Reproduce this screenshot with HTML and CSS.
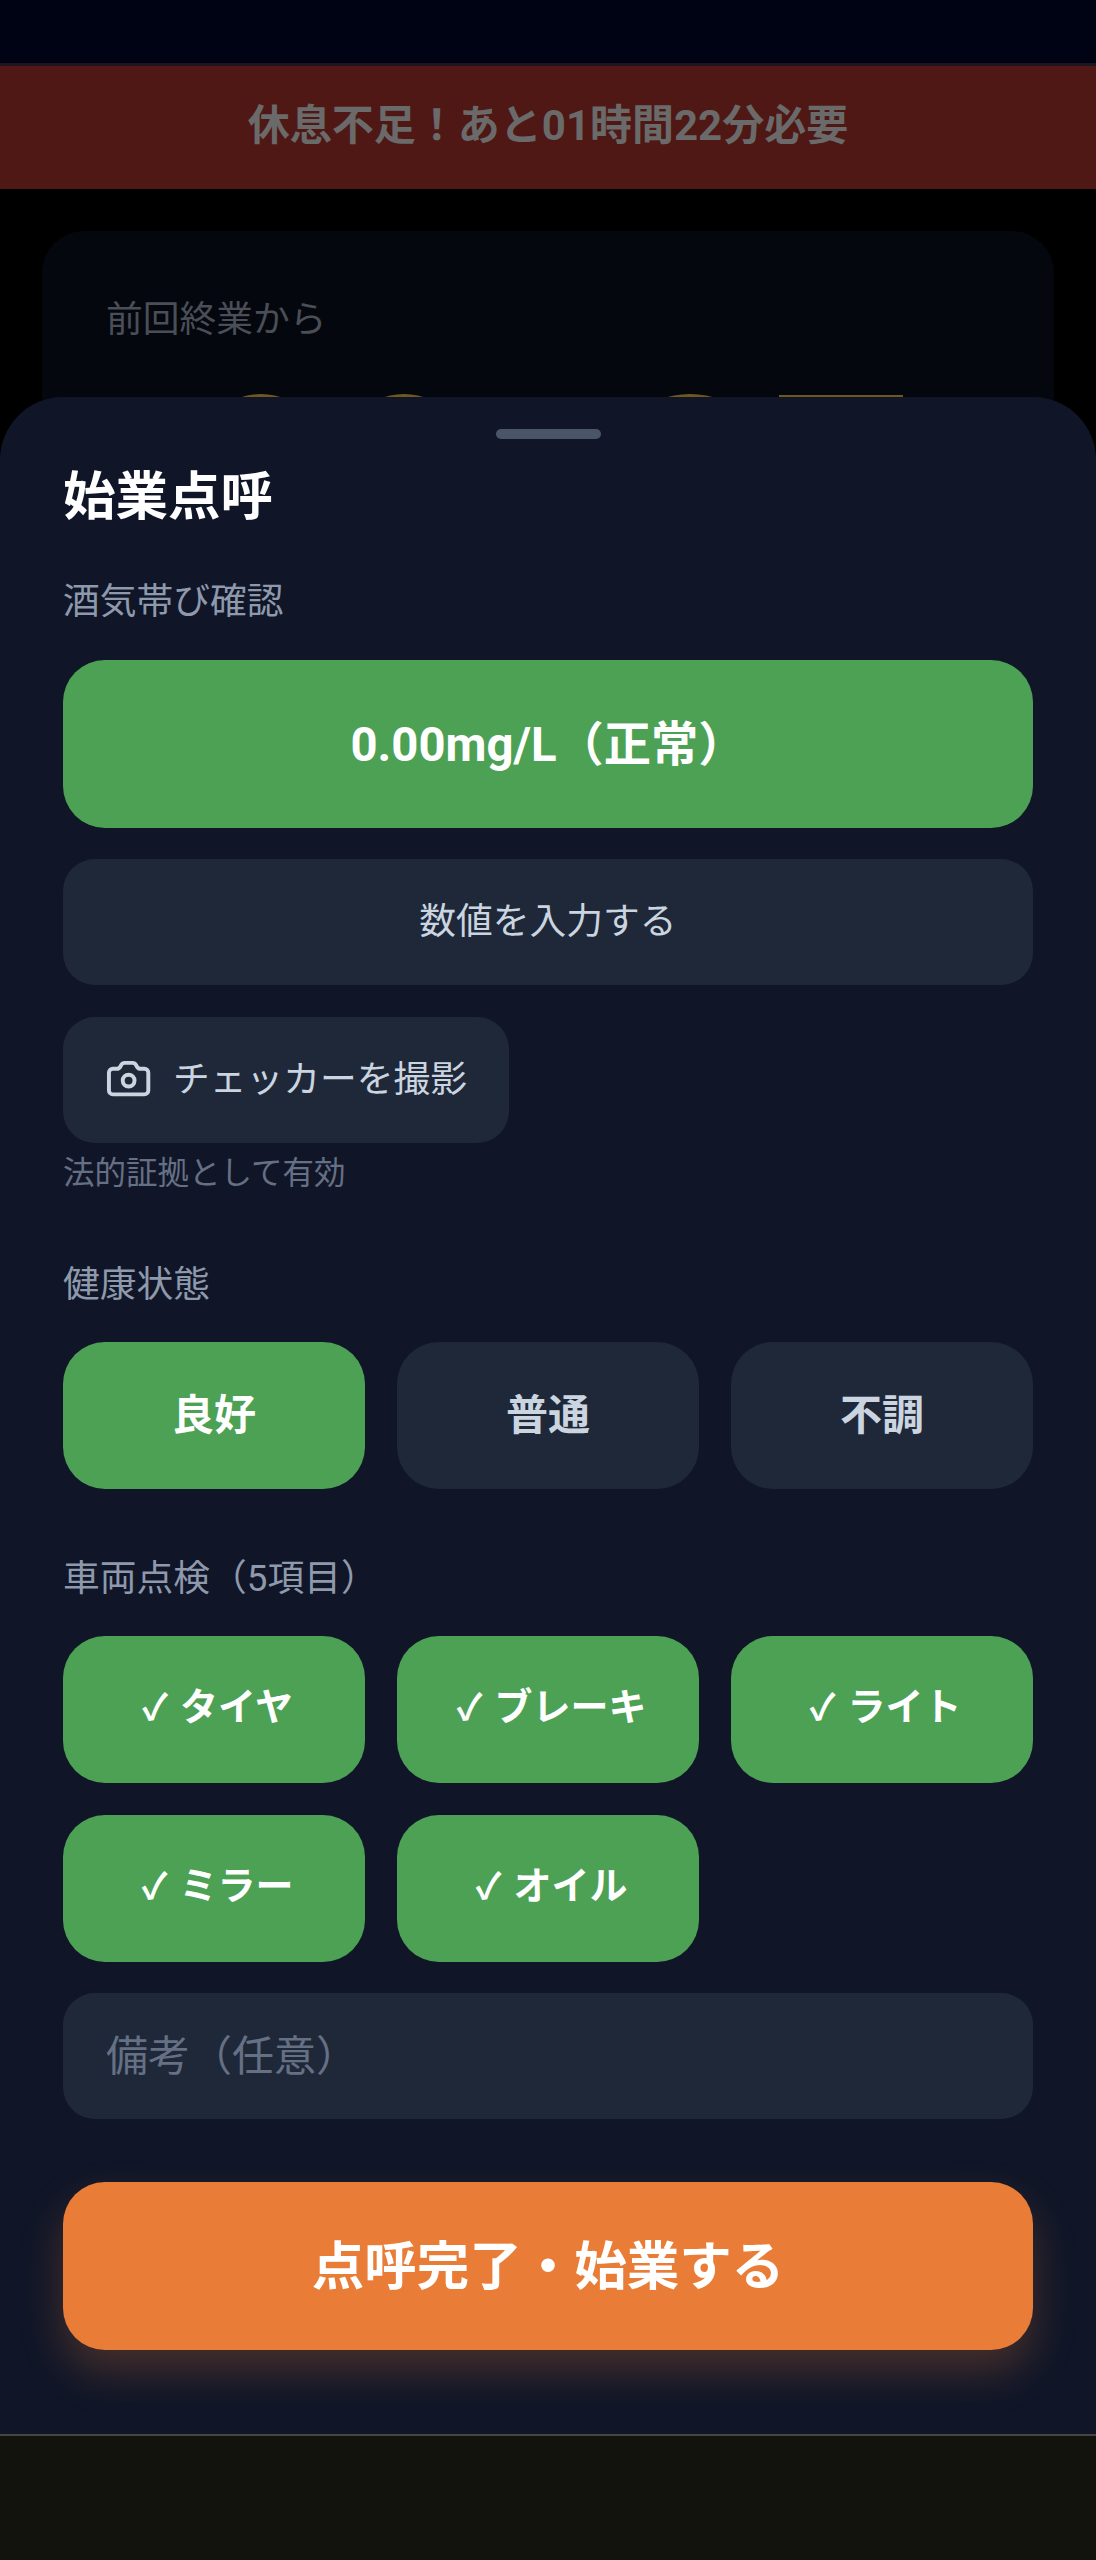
FILE: index.html
```html
<!DOCTYPE html>
<html lang="ja">
<head>
<meta charset="utf-8">
<title>始業点呼</title>
<link rel="stylesheet" href="styles.css">
</head>
<body>
<div class="screen">
  <main class="main">
    <div class="statusbar"></div>
    <div class="alert">休息不足！あと01時間22分必要</div>
    <section class="card">
      <div class="card-label">前回終業から</div>
      <div class="digits"><span class="arc a1"></span><span class="arc a2"></span><span class="arc a3"></span><span class="bar"></span></div>
    </section>
  </main>
  <footer class="bottomnav"></footer>
  <section class="sheet">
    <div class="handle"></div>
    <h1 class="title">始業点呼</h1>
    <div class="label first">酒気帯び確認</div>
    <button class="btn primary big">0.00mg/L（正常）</button>
    <button class="btn plain wide">数値を入力する</button>
    <button class="btn plain camera">
      <svg class="icon" viewBox="0 0 24 24" fill="none" stroke="currentColor" stroke-width="2" stroke-linecap="round" stroke-linejoin="round"><path d="M13.997 4a2 2 0 0 1 1.76 1.05l.486.9A2 2 0 0 0 18.003 7H20a2 2 0 0 1 2 2v9a2 2 0 0 1-2 2H4a2 2 0 0 1-2-2V9a2 2 0 0 1 2-2h1.997a2 2 0 0 0 1.759-1.048l.489-.904A2 2 0 0 1 10.004 4z"/><circle cx="12" cy="13" r="3"/></svg>
      <span>チェッカーを撮影</span>
    </button>
    <div class="hint">法的証拠として有効</div>
    <div class="label health-label">健康状態</div>
    <div class="grid">
      <button class="btn cell on strong">良好</button>
      <button class="btn cell off strong">普通</button>
      <button class="btn cell off strong">不調</button>
    </div>
    <div class="label check-label">車両点検（5項目）</div>
    <div class="grid">
      <button class="btn cell on check"><span class="mark">✓</span>タイヤ</button>
      <button class="btn cell on check"><span class="mark">✓</span>ブレーキ</button>
      <button class="btn cell on check"><span class="mark">✓</span>ライト</button>
      <button class="btn cell on check"><span class="mark">✓</span>ミラー</button>
      <button class="btn cell on check"><span class="mark">✓</span>オイル</button>
    </div>
    <div class="note">備考（任意）</div>
    <button class="btn submit">点呼完了・始業する</button>
  </section>
</div>
</body>
</html>
```
FILE: styles.css
```css
* { box-sizing: border-box; }
html, body { margin: 0; padding: 0; background: #000; }
body { font-family: Roboto, "Noto Sans CJK JP", sans-serif; }
.screen { position: relative; width: 1096px; height: 2560px; overflow: hidden; display: flex; flex-direction: column; background: #000; }
.main { flex: 1; min-height: 0; overflow: hidden; }
.statusbar { height: 66px; background: #000313; border-bottom: 3px solid #1f1420; }
.alert { height: 123px; padding-bottom: 12px; background: #4f1815; color: #6a6a6a; font-size: 42px; font-weight: 700; display: flex; align-items: center; justify-content: center; }
.card { margin: 42px 42px 0; height: 400px; padding: 65px 64px 0; border-radius: 42px; background: #04070e; position: relative; }
.card-label { font-size: 36.75px; line-height: 48px; color: #4a4e57; }
.digits { position: relative; height: 100px; }
.arc { position: absolute; top: 50px; height: 40px; border-radius: 50%; background: #6f5820; }
.a1 { left: 119px; width: 72px; }
.a2 { left: 262px; width: 72px; }
.a3 { left: 542px; width: 84px; }
.bar { position: absolute; left: 673px; top: 51px; width: 124px; height: 40px; background: #6f5820; }
.bottomnav { height: 126px; background: #13130d; border-top: 2px solid #45463f; }
.sheet { position: absolute; left: 0; right: 0; top: 397px; height: 2037px; padding: 32px 63px 0; background: #101628; border-radius: 63px 63px 0 0; }
.handle { width: 105px; height: 10px; margin: 0 auto; border-radius: 5px; background: #4a5568; }
.title { margin: 24px 0 0; font-size: 52.5px; line-height: 68px; font-weight: 700; color: #fff; }
.label { padding-top: 2px; margin-bottom: -2px; font-size: 36.75px; line-height: 48px; color: #8e99ac; }
.first { margin-top: 45px; }
.health-label { margin-top: 64px; }
.check-label { margin-top: 64px; }
.btn { display: flex; align-items: center; justify-content: center; border: 0; padding: 0 0 8px; font-family: inherit; width: 100%; }
.big { height: 168px; margin-top: 36px; border-radius: 42px; font-size: 47.25px; font-weight: 700; }
.primary { background: #4ca154; color: #fff; }
.plain { background: #1f2839; color: #cbd5e0; font-size: 36.75px; }
.wide { height: 126px; margin-top: 31px; border-radius: 32px; }
.camera { width: 446px; height: 126px; margin-top: 32px; border-radius: 32px; gap: 21px; }
.icon { width: 47.25px; height: 47.25px; flex: none; margin-top: 6px; }
.hint { margin-top: 10px; font-size: 31.5px; line-height: 42px; color: #667085; }
.grid { display: grid; grid-template-columns: repeat(3, 1fr); gap: 32px; margin-top: 35px; }
.cell { height: 147px; border-radius: 42px; font-size: 38px; font-weight: 700; }
.check { padding: 0 0 12px 7px; }
.mark { font-size: 36px; margin-right: 12px; }
.strong { font-size: 42px; }
.on { background: #4ca154; color: #fff; }
.off { background: #1f2839; color: #cbd5e0; }
.note { height: 126px; margin-top: 31px; padding: 0 0 8px 43px; display: flex; align-items: center; border-radius: 32px; background: #1f2839; font-size: 42px; color: #667085; }
.submit { height: 168px; margin-top: 63px; border-radius: 42px; background: #e97c36; color: #fff; font-size: 52.5px; font-weight: 700; box-shadow: 0 21px 42px rgba(233, 124, 54, 0.25); }
```
